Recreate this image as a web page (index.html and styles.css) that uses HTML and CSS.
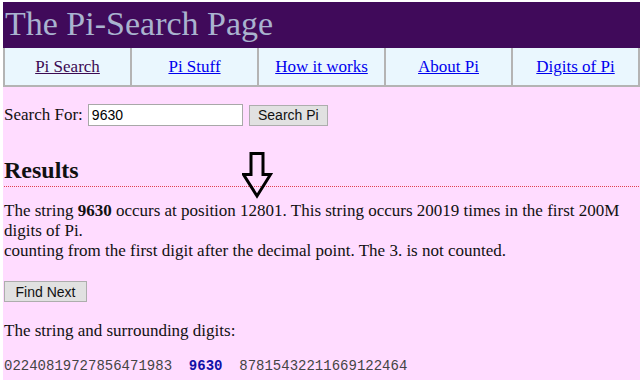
FILE: index.html
```html
<!DOCTYPE html>
<html lang="en">
<head>
  <meta charset="UTF-8" />
  <title>The Pi-Search Page</title>
  <link rel="stylesheet" href="styles.css">
</head>
<body>
  <div class="page">
    <div class="banner">The Pi-Search Page</div>
    <table class="nav">
      <tr>
        <td><a class="visited" href="#">Pi Search</a></td>
        <td><a href="#">Pi Stuff</a></td>
        <td><a href="#">How it works</a></td>
        <td><a href="#">About Pi</a></td>
        <td><a href="#">Digits of Pi</a></td>
      </tr>
    </table>

    <div class="content">
      <form class="search">
        <label for="q">Search For:</label>
        <input type="text" id="q" value="9630" />
        <button type="button">Search Pi</button>
      </form>

      <div class="results-head">
        <h2>Results</h2>
        <svg class="arrow" width="31" height="49" viewBox="0 0 31 49">
          <polygon points="9,1.5 21,1.5 21,22.5 28.5,22.5 15,44 1.5,22.5 9,22.5" fill="none" stroke="#000" stroke-width="3"/>
        </svg>
      </div>

      <p class="found">The string <b>9630</b> occurs at position 12801. This string occurs 20019 times in the first 200M digits of Pi.<br>
      counting from the first digit after the decimal point. The 3. is not counted.</p>

      <button type="button" class="next">Find Next</button>

      <p class="around">The string and surrounding digits:</p>
      <pre class="digits">02240819727856471983  <b>9630</b>  87815432211669122464</pre>
    </div>
  </div>
</body>
</html>
```

FILE: styles.css
```css
html, body { background: #fff; }
body { margin: 2px 0 0 3px; font-family: "Liberation Serif", serif; font-size: 17px; color: #111; }
.page { background: #ffdcff; min-height: 378px; }

.banner {
  background: #400a5a;
  color: #a9b3cf;
  font-size: 34px;
  height: 46px;
  line-height: 44px;
  padding-left: 2px;
}

.nav { width: 100%; table-layout: fixed; border-collapse: collapse; background: #eaf7fe; }
.nav td {
  border: 2px solid #b4b4b4;
  border-top: 0;
  text-align: center;
  height: 37px;
  padding: 0;
  font-size: 17px;
}
.nav a { color: #0000ee; }
.nav a.visited { color: #3c0a52; }

.content { padding: 0 1px; }

.search { margin: 0; padding-top: 17px; display: flex; align-items: center; height: 22px; }
.search label { margin-right: 5px; }
.search input {
  box-sizing: border-box;
  width: 155px;
  height: 22px;
  padding: 1px 3px;
  border: 1px solid #a8a8a8;
  font-family: "Liberation Sans", sans-serif;
  font-size: 14px;
  margin: 0;
}
.search button, .next {
  box-sizing: border-box;
  font-family: "Liberation Sans", sans-serif;
  font-size: 14px;
  color: #111;
  background: #e1e1e1;
  border: 1px solid #adadad;
  padding: 0;
  white-space: nowrap;
  text-align: center;
}
.search button { width: 79px; height: 21px; margin-left: 6px; }

.results-head { position: relative; margin-top: 30px; border-bottom: 1px dotted #e04050; }
.results-head h2 { margin: 0; font-size: 24px; line-height: 28px; padding-bottom: 2px; }
.arrow { position: absolute; left: 238px; top: -4px; }

p { margin: 0; line-height: 20px; }
.found { margin-top: 14px; }

.next { display: block; width: 83px; height: 21px; margin: 20px 0 0; }

.around { margin-top: 19px; }

.digits {
  margin: 17px 0 0;
  line-height: 16px;
  font-family: "Liberation Mono", monospace;
  font-size: 14px;
  color: #444;
}
.digits b { color: #1010a8; }
```
